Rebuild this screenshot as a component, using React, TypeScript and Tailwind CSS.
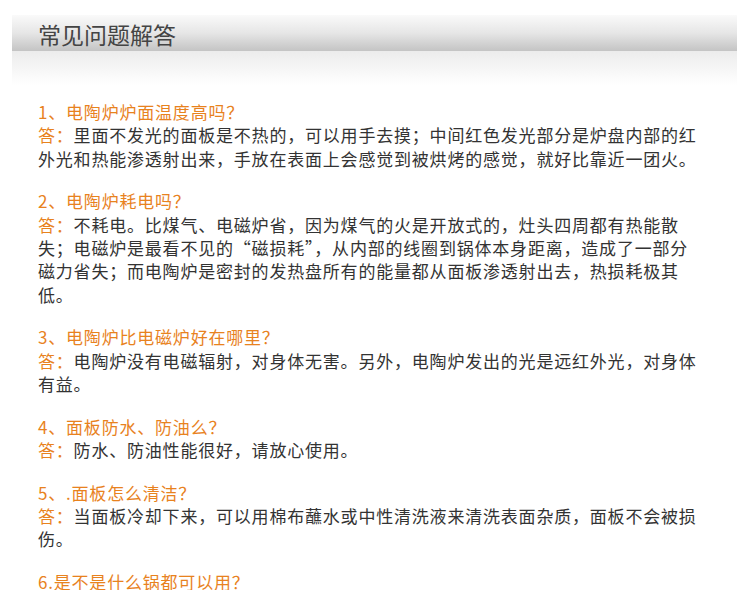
const F = { fontFamily: '"Noto Sans CJK SC", "Liberation Sans", sans-serif' };
const items = [
  ["1、电陶炉炉面温度高吗？", "里面不发光的面板是不热的，可以用手去摸；中间红色发光部分是炉盘内部的红外光和热能渗透射出来，手放在表面上会感觉到被烘烤的感觉，就好比靠近一团火。"],
  ["2、电陶炉耗电吗？", "不耗电。比煤气、电磁炉省，因为煤气的火是开放式的，灶头四周都有热能散失；电磁炉是最看不见的“磁损耗”，从内部的线圈到锅体本身距离，造成了一部分磁力省失；而电陶炉是密封的发热盘所有的能量都从面板渗透射出去，热损耗极其低。"],
  ["3、电陶炉比电磁炉好在哪里？", "电陶炉没有电磁辐射，对身体无害。另外，电陶炉发出的光是远红外光，对身体有益。"],
  ["4、面板防水、防油么？", "防水、防油性能很好，请放心使用。"],
  ["5、.面板怎么清洁？", "当面板冷却下来，可以用棉布蘸水或中性清洗液来清洗表面杂质，面板不会被损伤。"],
  ["6.是不是什么锅都可以用？", "电陶炉对锅的材料没有要求，但必须是耐高温的平底锅，用陶瓷、玻璃锅具时，务必要知道耐温是否超过800度。"],
];
export default function App() {
  return (
    <div className="w-[750px] h-[590px] bg-white overflow-hidden" style={F}>
      <div className="pt-[15px] px-[12px] mr-[1px]">
        <div className="h-[36px] bg-gradient-to-b from-[#fafafa] via-[#e6e6e6] to-[#c4c4c4] flex items-center pl-[26px]">
          <span className="text-[23px] text-[#444] leading-none pt-[2px]">常见问题解答</span>
        </div>
        <div className="h-[34px] bg-gradient-to-b from-[#ececec] to-white" />
      </div>
      <div className="pl-[38px] w-[705px] pt-[15px] text-[17px] leading-[23.3px] tracking-[0.8px] text-[#333]">
        {items.map(([q, a], i) => (
          <div key={i} className="mb-[19.5px]">
            <div className="text-[#e8821e]">{q}</div>
            <div><span className="text-[#e8821e]">答：</span>{a}</div>
          </div>
        ))}
      </div>
    </div>
  );
}
